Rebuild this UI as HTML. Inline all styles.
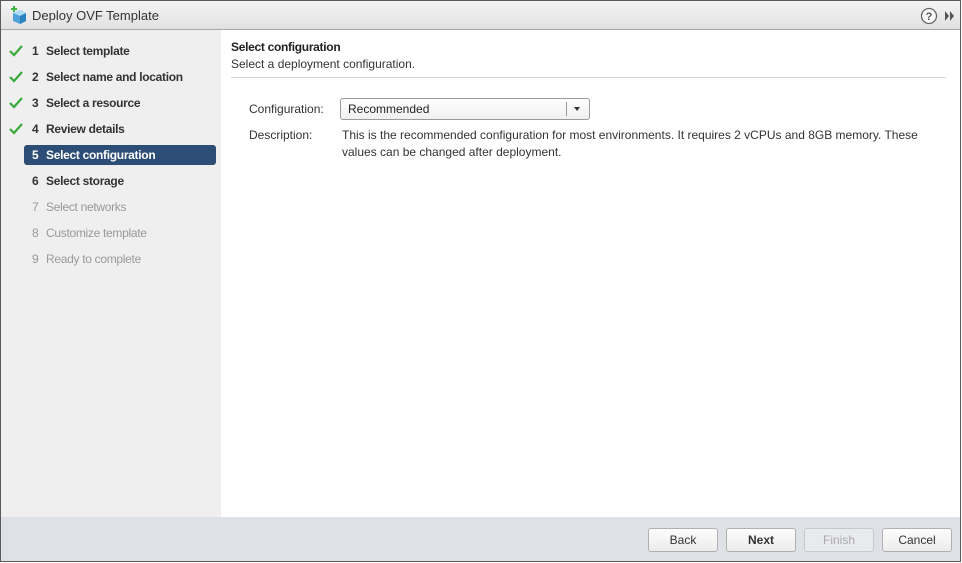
<!DOCTYPE html>
<html><head><style>
*{margin:0;padding:0;box-sizing:border-box}
body{width:962px;height:563px;background:#fff;font-family:"Liberation Sans",Arial,sans-serif;font-size:12px;color:#333;position:relative;overflow:hidden}
.frame{position:absolute;left:0;top:0;width:961px;height:562px;border:1px solid #5a5a5a;}
.title{position:absolute;left:1px;top:1px;width:959px;height:29px;background:linear-gradient(#f4f4f4,#e1e1e1);border-bottom:1px solid #a8a8a8}
.title span{position:absolute;left:31px;top:7px;font-size:13px;color:#333}
.side{position:absolute;left:1px;top:30px;width:220px;height:487px;background:#efefef}
.step{position:absolute;left:0;height:20px;font-size:12px;font-weight:bold;letter-spacing:-0.3px;line-height:20px}
.step .n{position:absolute;left:31px}
.step .t{position:absolute;left:45px;white-space:nowrap}
.dis{color:#999;font-weight:normal}
.chk{position:absolute;left:8px;top:4px}
.sel{position:absolute;left:23px;top:115px;width:192px;height:20px;background:#2c4d75;border-radius:3px}
.content{position:absolute;left:221px;top:30px;width:739px;height:487px;background:#fff}
.foot{position:absolute;left:1px;top:517px;width:959px;height:44px;background:#dee1e5}
.btn{position:absolute;top:11px;height:24px;width:70px;border:1px solid #b0b0b0;border-radius:3px;background:linear-gradient(#fdfdfd,#ececec);text-align:center;line-height:22px;font-size:12px;color:#333}
</style></head><body>
<div class="frame"></div>
<div class="title">
<svg style="position:absolute;left:8px;top:5px" width="20" height="20" viewBox="0 0 20 20"><path d="M4 7 L11 4 L17 7 L17 15 L11 18 L4 15Z" fill="#4fa3d9"/><path d="M4 7 L11 10 L17 7 L11 4Z" fill="#a9dbf5"/><path d="M11 10 L11 18 L17 15 L17 7Z" fill="#2b82c0"/><path d="M2 3h6M5 0v6" stroke="#3fb33f" stroke-width="2"/></svg>
<span>Deploy OVF Template</span>
<svg style="position:absolute;left:919px;top:6px" width="38" height="18" viewBox="0 0 38 18"><circle cx="9" cy="9" r="7.5" fill="#fafafa" stroke="#666" stroke-width="1.3"/><text x="9" y="13" font-size="11" font-weight="bold" text-anchor="middle" fill="#555" font-family="Liberation Sans">?</text><path d="M25 4l4 5-4 5zM30 4l4 5-4 5z" fill="#555"/></svg>
</div>
<div class="side">
<div class="sel"></div>
<div class="step" style="top:11px"><svg class="chk" width="14" height="12"><path d="M1 6l4 4 8-9" stroke="#3aa83a" stroke-width="2.2" fill="none"/></svg><span class="n">1</span><span class="t">Select template</span></div>
<div class="step" style="top:37px"><svg class="chk" width="14" height="12"><path d="M1 6l4 4 8-9" stroke="#3aa83a" stroke-width="2.2" fill="none"/></svg><span class="n">2</span><span class="t">Select name and location</span></div>
<div class="step" style="top:63px"><svg class="chk" width="14" height="12"><path d="M1 6l4 4 8-9" stroke="#3aa83a" stroke-width="2.2" fill="none"/></svg><span class="n">3</span><span class="t">Select a resource</span></div>
<div class="step" style="top:89px"><svg class="chk" width="14" height="12"><path d="M1 6l4 4 8-9" stroke="#3aa83a" stroke-width="2.2" fill="none"/></svg><span class="n">4</span><span class="t">Review details</span></div>
<div class="step" style="top:115px;color:#fff"><span class="n">5</span><span class="t">Select configuration</span></div>
<div class="step" style="top:141px"><span class="n">6</span><span class="t">Select storage</span></div>
<div class="step dis" style="top:167px"><span class="n">7</span><span class="t">Select networks</span></div>
<div class="step dis" style="top:193px"><span class="n">8</span><span class="t">Customize template</span></div>
<div class="step dis" style="top:219px"><span class="n">9</span><span class="t">Ready to complete</span></div>
</div>
<div class="content">
<div style="position:absolute;left:10px;top:10px;font-weight:bold;letter-spacing:-0.3px;color:#222">Select configuration</div>
<div style="position:absolute;left:10px;top:27px;color:#333">Select a deployment configuration.</div>
<div style="position:absolute;left:10px;top:47px;width:715px;height:1px;background:#d5d5d5"></div>
<div style="position:absolute;left:28px;top:72px;color:#333">Configuration:</div>
<div style="position:absolute;left:119px;top:68px;width:250px;height:22px;border:1px solid #9a9a9a;border-radius:3px;background:linear-gradient(#fff,#f0f0f0)">
<span style="position:absolute;left:7px;top:3px;color:#222">Recommended</span>
<div style="position:absolute;left:225px;top:3px;width:1px;height:14px;background:#999"></div>
<div style="position:absolute;left:233px;top:8px;border-left:3px solid transparent;border-right:3px solid transparent;border-top:4px solid #333"></div>
</div>
<div style="position:absolute;left:28px;top:98px;color:#333">Description:</div>
<div style="position:absolute;left:121px;top:97px;width:600px;line-height:17px;color:#333">This is the recommended configuration for most environments. It requires 2 vCPUs and 8GB memory. These values can be changed after deployment.</div>
</div>
<div class="foot">
<div class="btn" style="left:647px">Back</div>
<div class="btn" style="left:725px;font-weight:bold">Next</div>
<div class="btn" style="left:803px;color:#aaa;background:#e8eaed;border-color:#c8c8c8">Finish</div>
<div class="btn" style="left:881px">Cancel</div>
</div>
</body></html>
